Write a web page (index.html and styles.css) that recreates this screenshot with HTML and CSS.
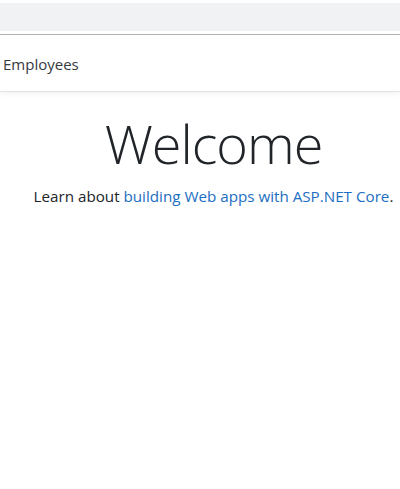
FILE: index.html
```html
<!DOCTYPE html>
<html>
<head>
<meta charset="utf-8">
<link rel="stylesheet" href="styles.css">
</head>
<body>
<div class="topbar"></div>
<div class="gap"></div>
<header class="nav">
  <a class="nav-link" href="#">Employees</a>
</header>
<main class="content">
  <h1 class="title">Welcome</h1>
  <p class="lead">Learn about <a href="#">building Web apps with ASP.NET Core</a>.</p>
</main>
</body>
</html>
```
FILE: styles.css
```css
html, body {
  margin: 0;
  padding: 0;
  background: #fff;
  font-family: "Open Sans", "Noto Sans", sans-serif;
  color: #212529;
}
body {
  padding-top: 3px;
}
.topbar {
  height: 28px;
  background: #f1f2f4;
}
.gap {
  height: 3px;
  border-bottom: 1px solid #b5b5b5;
}
.nav {
  height: 56px;
  display: flex;
  align-items: center;
  border-bottom: 1px solid #e3e3e3;
  box-shadow: 0 2px 5px rgba(0,0,0,0.05);
}
.nav-link {
  padding-left: 3px;
  padding-top: 1px;
  font-size: 15px;
  color: #343a40;
  text-decoration: none;
}
.content {
  text-align: center;
  padding-top: 19px;
  padding-left: 27px;
}
.title {
  margin: 0;
  font-size: 54px;
  font-weight: 300;
  line-height: 1.2;
  color: #212529;
  letter-spacing: -1px;
}
.lead {
  margin: 10px 0 0;
  font-size: 15.2px;
}
.lead a {
  color: #1b6ec2;
  text-decoration: none;
}
```
